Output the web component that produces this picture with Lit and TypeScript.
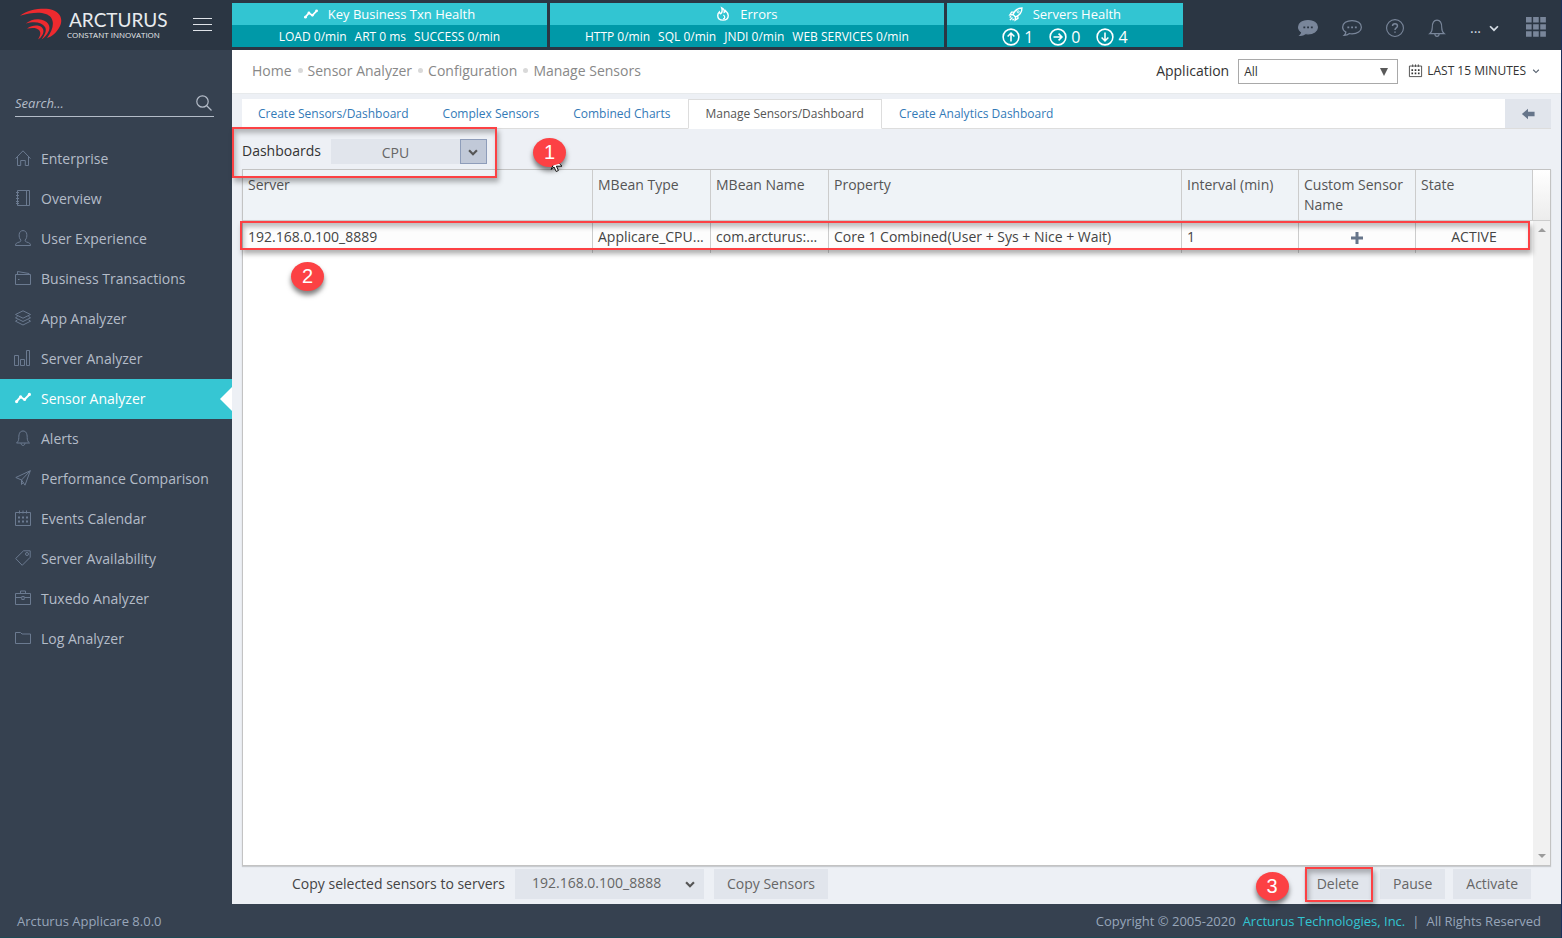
import { LitElement, html, css, svg, TemplateResult } from "lit";
import { customElement, state } from "lit/decorators.js";

type Shape = TemplateResult;

// Outline icons on a 16 x 16 grid; strokes take the current text colour.
const icons: Record<string, Shape> = {
  home: svg`<path d="M.5 8.6 8 .8l7.5 7.8M2.5 6.8v8.7h3.2v-5h4.6v5h3.2V6.8"/>`,
  book: svg`<path d="M2.5.5h12v15h-12zM11.5.5v15M1 2.5h3M1 5.5h3M1 8.500h3M1 11.500h3M1 13.500h3"/>`,
  user: svg`<path d="M5.800 10C4.400 8.600 4 6.600 4.200 4.300 4.400 2 6 .6 8 .6s3.600 1.400 3.800 3.700c.2 2.300-.2 4.300-1.600 5.700-.2 1.300.4 1.700 1.600 2.100 2.200.7 3.700 1 3.700 3.400H.5c0-2.400 1.500-2.700 3.700-3.400 1.200-.4 1.800-.8 1.600-2.100z"/>`,
  wallet: svg`<path d="M.5 4.500h15v10H.5zM2.500 4.300V1.500l11.500 2v1M3 9.500h1.500"/>`,
  layers: svg`<path d="m8 .8 7.500 3.700L8 8.200.5 4.500zM2.500 6.500l-2 1.300L8 11.500l7.500-3.700-2-1.300M2.500 9.800l-2 1.400L8 15l7.500-3.800-2-1.400"/>`,
  bars: svg`<path d="M-.5 5.500h4v10h-4zM5.500 9.500h4v6h-4zM11.500.5h3v15h-3z"/>`,
  trend: svg`<path stroke-width="2" d="m1.500 11.500 4-4.500 4 2.500 5-5"/><g fill="currentColor" stroke="none"><circle cx="1.600" cy="11.600" r="1.600"/><circle cx="5.600" cy="6.800" r="1.600"/><circle cx="9.600" cy="9.400" r="1.500"/><circle cx="14.400" cy="4.400" r="1.600"/></g>`,
  bell: svg`<path d="M1.500 13c1.800-1.400 2.300-3 2.300-5.500C3.800 3.500 5 1 8 1s4.200 2.500 4.200 6.500c0 2.500.5 4.100 2.300 5.500zM6 13.200c.2 1.500.8 2.200 2 2.200s1.800-.7 2-2.200"/>`,
  plane: svg`<path d="M.8 7.500 15.300.7 10 15.200 6.500 10zM15.300.7 6.500 10v4.500l1.800-2"/>`,
  calendar: svg`<path d="M.5 2.500h15v13H.5zM4.500.5v3M8 .5v3M11.500.5v3"/><path stroke-width="2" stroke-dasharray="2 2" d="M3 7.500h10M3 11.500h10"/>`,
  tag: svg`<path d="M8.500.8h6.700v6.500l-8 8L.7 8.500z"/><circle cx="12" cy="4" r="1.500"/>`,
  case: svg`<path d="M.5 3.500h15v11H.5zM5.500 3.300V1h5v2.300M.5 7.500h6M9.500 7.500h6M6.800 6.500h2.400v3H6.800z"/>`,
  folder: svg`<path d="M.5 2.500h5l1.500 1.500h8.500v9.500H.5z"/>`,
  search: svg`<circle cx="6.500" cy="6.500" r="5.700"/><path d="m10.500 10.500 5 5"/>`,
  flame: svg`<path stroke-width="1.600" d="M6.500 1c2.500 1.200 3.400 3 3 5 .9-.3 1.300-.9 1.400-1.800C12.800 5.800 14 7.600 14 9.700c0 3.300-2.600 5.300-6 5.300s-6-2-6-5.300C2 8 2.700 6.700 3.800 5.700 4 6.900 4.500 7.500 5.300 7.800 7.500 6 7.300 3.500 6.500 1z"/><path stroke-width="1.400" d="M8.500 9c1 1 1.500 1.700 1.500 2.700 0 1-.8 1.800-2 1.800"/>`,
  rocket: svg`<path stroke-width="1.600" d="M4.500 8.500C6.500 4 9.500 1.200 14.800 1.200c0 5.300-2.800 8.300-7.300 10.300zM6 5.800H3L1 9l3.500-.4M10.200 10v3L7 15l.4-3.500"/><circle cx="10.500" cy="5.500" r="1.200"/><path stroke-width="1.600" d="M1 15l3-3M.8 12l1.500-1.500M4 15.200l1.500-1.500"/>`,
  up: svg`<g stroke-width="1.400"><circle cx="8" cy="8" r="7"/><path d="M8 12V4.500M5 7.500l3-3 3 3"/></g>`,
  right: svg`<g stroke-width="1.400"><circle cx="8" cy="8" r="7"/><path d="M4 8h7.500M8.500 5l3 3-3 3"/></g>`,
  down: svg`<g stroke-width="1.400"><circle cx="8" cy="8" r="7"/><path d="M8 4v7.500M5 8.500l3 3 3-3"/></g>`,
  chat: svg`<path fill="currentColor" d="M8 2c4.200 0 7.500 2.200 7.500 5.300S12.200 12.600 8 12.600c-.8 0-1.400 0-2-.2-1.300 1-2.700 1.500-4.300 1.500.9-.8 1.300-1.600 1.400-2.600C1.500 10.300.5 8.900.5 7.300.5 4.200 3.800 2 8 2z"/><path stroke="#2b3643" stroke-width="1.500" stroke-dasharray="1.500 1.500" d="M4.300 7.500h8"/>`,
  chatLine: svg`<path d="M8 2c4.200 0 7.500 2.200 7.500 5.300S12.200 12.600 8 12.600c-.8 0-1.400 0-2-.2-1.300 1-2.700 1.500-4.300 1.500.9-.8 1.300-1.600 1.400-2.600C1.500 10.300.5 8.900.5 7.300.5 4.200 3.800 2 8 2z"/><path stroke-width="1.500" stroke-dasharray="1.500 1.500" d="M4.300 7.500h8"/>`,
  help: svg`<circle cx="8" cy="8" r="7.500"/><path stroke-width="1.300" d="M5.800 6.300C5.800 5 6.700 4.200 8 4.200s2.200.8 2.200 2C10.200 7.900 8 7.900 8 9.700M8 11v1.300"/>`,
  chevron: svg`<path d="m3.500 6 4.500 4.500L12.500 6"/>`,
  apps: svg`<path stroke="none" fill="currentColor" d="M0 0h4.500v4.300H0zM5.700 0h4.500v4.300H5.700zM11.400 0h4.500v4.300h-4.500zM0 5.700h4.500V10H0zM5.700 5.700h4.500V10H5.700zM11.400 5.700h4.500V10h-4.500zM0 11.400h4.500v4.300H0zM5.700 11.400h4.500v4.300H5.700zM11.400 11.400h4.500v4.300h-4.500z"/>`,
  back: svg`<path stroke="none" fill="currentColor" d="M1 8l7-6v3.500h7.500v5H8V14z"/>`,
  plus: svg`<path stroke-width="4" d="M8 0v16M0 8h16"/>`,
};

const icon = (name: string, cls = "", size = 16) => html`<svg
  class="icon ${cls}"
  width=${size}
  height=${size}
  viewBox="0 0 16 16"
  aria-hidden="true"
>
  ${icons[name]}
</svg>`;

const base = css`
  * {
    box-sizing: border-box;
  }
  a {
    text-decoration: none;
    color: inherit;
  }
  ul {
    list-style: none;
    margin: 0;
    padding: 0;
  }
  button,
  input,
  select {
    font: inherit;
    color: inherit;
    border: 0;
    border-radius: 0;
    padding: 0;
    margin: 0;
    background: none;
    outline: 0;
  }
  select {
    appearance: none;
  }
  .icon {
    display: block;
    flex: none;
    fill: none;
    stroke: currentColor;
    overflow: visible;
  }
  .thick {
    stroke-width: 2.5;
  }
`;

@customElement("app-header")
class AppHeader extends LitElement {
  static styles = [
    base,
    css`
      :host {
        display: flex;
        height: 50px;
        background: #2b3643;
        color: #fff;
        font-size: 13px;
      }
      .brand {
        flex: none;
        width: 232px;
        display: flex;
        align-items: flex-start;
        padding: 8px 20px 0 20px;
      }
      .swoosh {
        flex: none;
        width: 42px;
        height: 33px;
      }
      .words {
        display: flex;
        flex-direction: column;
        padding: 1px 0 0 5px;
        font-family: Lato, sans-serif;
        color: #e8ebee;
        white-space: nowrap;
      }
      .name {
        font-size: 19px;
        line-height: 21px;
        padding-left: 2px;
      }
      .motto {
        font-family: "Open Sans", sans-serif;
        font-size: 8px;
        line-height: 10px;
      }
      .menu {
        margin: 10px 0 0 auto;
        width: 19px;
        height: 13px;
        border-top: 1px solid #dfe3e8;
        border-bottom: 1px solid #dfe3e8;
        display: flex;
        align-items: center;
      }
      .menu i {
        flex: 1;
        height: 1px;
        background: #dfe3e8;
      }
      .health {
        flex: none;
        width: 951px;
        display: grid;
        grid-template-columns: 4fr 5fr 3fr;
        gap: 3px;
        padding: 3px 0;
      }
      .tile {
        display: grid;
        grid-template-rows: 22px 22px;
      }
      .title,
      .stats {
        display: flex;
        align-items: center;
        justify-content: center;
        white-space: nowrap;
      }
      .title {
        background: #32c5d2;
        gap: 10px;
      }
      .stats {
        background: #0099a8;
        gap: 8px;
        padding-top: 2px;
        font-size: 12px;
      }
      .stats.counts {
        gap: 16px;
        font-size: 16px;
      }
      .count {
        display: flex;
        align-items: center;
        gap: 4px;
      }
      .tools {
        flex: 1;
        display: flex;
        align-items: center;
        justify-content: flex-end;
        padding: 6px 15px 0 0;
        color: #79869a;
      }
      .tools button {
        display: block;
        margin-right: 24px;
      }
      .tools .account {
        display: flex;
        align-items: center;
        gap: 6px;
        color: #d5dce4;
        margin-right: 25px;
        font-size: 14px;
      }
      .account .icon {
        stroke-width: 2;
      }
      .tools .apps {
        margin: 0;
        padding-bottom: 2px;
      }
    `,
  ];

  render() {
    return html`
      <div class="brand">
        <svg class="swoosh" viewBox="0 0 42 33" fill="#ed2a2f" aria-hidden="true">
          <path d="M0 7.700C8 1 22 0 29 1c12 2 14.500 11 10.500 18-3 5.500-7 9.500-12.500 11 6-8 7.500-15.500 4-20.500C26.500 3.500 14 3.500 0 7.700z" />
          <path d="M5.700 15.500C10 12.500 14 11 18.500 11.300c9 .6 13.500 7.200 9.500 13.200-1.500 2.600-3.500 5-6.500 7 3.500-5 5.500-9 3.500-12.500-3-4.500-10-6-19.300-3.500z" />
          <path d="M7 20.500c4-2.500 7-3.200 10.500-2.900 6 .7 7.500 6 4.500 10-1 1.500-2 2.900-4 3.900 2-3.500 3.500-6.500 1-9.500-2.500-2.300-6-2.500-12-1.500z" />
        </svg>
        <div class="words">
          <span class="name">ARCTURUS</span>
          <span class="motto">CONSTANT INNOVATION</span>
        </div>
        <button class="menu" aria-label="Toggle menu"><i></i></button>
      </div>
      <div class="health">
        <div class="tile">
          <div class="title">${icon("trend", "", 14)}<span>Key Business Txn Health</span></div>
          <div class="stats"><span>LOAD 0/min</span><span>ART 0 ms</span><span>SUCCESS 0/min</span></div>
        </div>
        <div class="tile">
          <div class="title">${icon("flame", "", 14)}<span>Errors</span></div>
          <div class="stats">
            <span>HTTP 0/min</span><span>SQL 0/min</span><span>JNDI 0/min</span><span>WEB SERVICES 0/min</span>
          </div>
        </div>
        <div class="tile">
          <div class="title">${icon("rocket", "", 14)}<span>Servers Health</span></div>
          <div class="stats counts">
            ${[["up", 1], ["right", 0], ["down", 4]].map(
              ([name, n]) => html`<span class="count">${icon(name as string, "", 18)}${n}</span>`
            )}
          </div>
        </div>
      </div>
      <div class="tools">
        <button aria-label="Messages">${icon("chat", "", 20)}</button>
        <button aria-label="Chat">${icon("chatLine", "", 20)}</button>
        <button aria-label="Help">${icon("help", "", 18)}</button>
        <button aria-label="Notifications">${icon("bell", "", 18)}</button>
        <button class="account" aria-label="Account"><span>...</span>${icon("chevron", "", 14)}</button>
        <button class="apps" aria-label="Applications">${icon("apps", "", 20)}</button>
      </div>
    `;
  }
}

@customElement("app-sidebar")
class AppSidebar extends LitElement {
  static styles = [
    base,
    css`
      :host {
        display: block;
        background: #364150;
        color: #b4bcc8;
      }
      .search {
        display: flex;
        align-items: center;
        margin: 39px 18px 22px 15px;
        padding-right: 2px;
        height: 28px;
        border-bottom: 1px solid #b4bcc8;
      }
      .search input {
        flex: 1;
        min-width: 0;
        font-size: 13px;
        font-style: italic;
      }
      .search input::placeholder {
        color: #b4bcc8;
        opacity: 1;
      }
      .search .icon {
        stroke-width: 1.2;
      }
      .link {
        display: flex;
        align-items: center;
        gap: 10px;
        height: 40px;
        padding-left: 15px;
        position: relative;
        white-space: nowrap;
      }
      .link .icon {
        color: #6b7a90;
        margin-bottom: 2px;
      }
      .link.on {
        background: #36c6d3;
        color: #fff;
      }
      .link.on .icon {
        color: #fff;
      }
      .link.on::after {
        content: "";
        position: absolute;
        right: 0;
        top: 8px;
        border: 12px solid transparent;
        border-left-width: 0;
        border-right-color: #fff;
      }
    `,
  ];

  private items = [
    ["home", "Enterprise"],
    ["book", "Overview"],
    ["user", "User Experience"],
    ["wallet", "Business Transactions"],
    ["layers", "App Analyzer"],
    ["bars", "Server Analyzer"],
    ["trend", "Sensor Analyzer"],
    ["bell", "Alerts"],
    ["plane", "Performance Comparison"],
    ["calendar", "Events Calendar"],
    ["tag", "Server Availability"],
    ["case", "Tuxedo Analyzer"],
    ["folder", "Log Analyzer"],
  ];

  render() {
    return html`
      <form class="search">
        <input type="text" placeholder="Search..." aria-label="Search" />
        <button type="button" aria-label="Search">${icon("search", "", 16)}</button>
      </form>
      <nav>
        <ul>
          ${this.items.map(
            ([name, label]) => html`<li>
              <a class="link ${label === "Sensor Analyzer" ? "on" : ""}" href="#">${icon(name)}<span>${label}</span></a>
            </li>`
          )}
        </ul>
      </nav>
    `;
  }
}

@customElement("sensor-page")
class SensorPage extends LitElement {
  @state() private tab = "Manage Sensors/Dashboard";

  static styles = [
    base,
    css`
      :host {
        display: flex;
        flex-direction: column;
        min-width: 0;
        background: #edf0f5;
        color: #333;
      }
      .bar {
        display: flex;
        align-items: center;
        height: 44px;
        padding: 0 20px;
        background: #fff;
        border-bottom: 1px solid #e7eaec;
      }
      .crumbs,
      .bar label,
      .bar .range {
        padding-bottom: 2px;
      }
      .crumbs {
        display: flex;
        align-items: center;
        flex: 1;
        color: #888;
      }
      .crumbs li {
        display: flex;
        align-items: center;
      }
      .crumbs li + li::before {
        content: "";
        width: 5px;
        height: 5px;
        border-radius: 50%;
        background: #d9d9d9;
        margin: 0 5px 0 6px;
      }
      .pick {
        position: relative;
        display: flex;
        align-items: center;
      }
      .pick .icon {
        position: absolute;
        right: 7px;
        pointer-events: none;
      }
      .app {
        margin: 0 11px 0 9px;
      }
      .app select {
        width: 160px;
        height: 25px;
        padding: 0 5px;
        border: 1px solid #a9a9a9;
        background: #fff;
        font-size: 12px;
      }
      .app::after {
        content: "";
        position: absolute;
        right: 10px;
        border: 4px solid transparent;
        border-top: 8px solid #5a5a5a;
        border-bottom: 0;
        pointer-events: none;
      }
      .range {
        display: flex;
        align-items: center;
        gap: 5px;
        font-size: 12px;
      }
      .range .small {
        color: #55606e;
        stroke-width: 1.8;
      }
      .content {
        flex: 1;
        display: flex;
        flex-direction: column;
        padding: 5px 10px;
      }
      .tabs {
        display: flex;
        height: 30px;
      }
      .tabs ul {
        flex: 1;
        display: flex;
        background: #fff;
        border-bottom: 1px solid #ddd;
      }
      .tab {
        height: 30px;
        padding: 0 16px;
        border: 1px solid transparent;
        font-size: 12px;
        color: #337ab7;
        white-space: nowrap;
        display: block;
      }
      li:first-child .tab {
        border-left: 0;
      }
      .tab.on {
        padding: 0 17px;
        background: #fff;
        color: #555;
        border-color: #ddd #ddd #fff;
      }
      .back {
        width: 46px;
        background: #e1e5ec;
        color: #66758a;
        border-bottom: 1px solid #ddd;
        display: grid;
        place-items: center;
      }
      .filter {
        position: relative;
        align-self: flex-start;
        display: flex;
        align-items: center;
        gap: 10px;
        height: 40px;
        padding-top: 5px;
      }
      .filter label {
        padding-bottom: 2px;
      }
      .mark {
        position: absolute;
        z-index: 2;
        border: 2px solid #fc4144;
        pointer-events: none;
        box-shadow: 2px 4px 5px rgba(0, 0, 0, 0.3), inset 2px 4px 5px rgba(0, 0, 0, 0.25);
      }
      .filter .mark {
        inset: -2px -10px -9px;
      }
      .badge {
        position: absolute;
        z-index: 3;
        width: 33px;
        height: 29px;
        border-radius: 50%;
        background: #fc4144;
        color: #fff;
        font: 20px/29px "Liberation Sans", sans-serif;
        text-align: center;
        box-shadow: 0 4px 5px rgba(0, 0, 0, 0.5);
      }
      .badge.one {
        left: 291px;
        top: 9px;
      }
      .badge.two {
        left: 51px;
        top: 41px;
      }
      .badge.three {
        left: -48px;
        top: 3px;
      }
      .cursor {
        position: absolute;
        z-index: 4;
        left: 308px;
        top: 27px;
      }
      .boards select {
        width: 156px;
        height: 25px;
        padding: 2px 27px 0 0;
        background: #e1e5ec;
        color: #666;
        text-align: center;
        text-align-last: center;
      }
      .boards .arrow {
        position: absolute;
        right: 0;
        width: 27px;
        height: 25px;
        border: 1px solid #8e9dba;
        background: #c1c9d8;
        color: #555;
        display: grid;
        place-items: center;
        pointer-events: none;
      }
      .arrow .icon {
        position: static;
      }
      .grid {
        flex: 1;
        display: flex;
        align-items: stretch;
        background: #fff;
        border: 1px solid #c3c3c3;
        box-shadow: 0 1px 1px rgba(0, 0, 0, 0.15);
      }
      .sheet {
        position: relative;
        flex: 1;
        min-width: 0;
      }
      table {
        width: 100%;
        table-layout: fixed;
        border-collapse: separate;
        border-spacing: 0;
        color: #555;
      }
      th,
      td {
        border-right: 1px solid #ccc;
        padding: 5px;
        line-height: 20px;
        font-weight: 400;
        text-align: left;
        vertical-align: top;
        overflow: hidden;
        text-overflow: ellipsis;
      }
      th {
        height: 51px;
        background: #eff3f7;
        border-bottom: 1px solid #ccc;
      }
      td {
        height: 32px;
        padding: 6px 5px;
        white-space: nowrap;
        color: #444;
        background: #fdfdfd;
      }
      td:last-child {
        border-right-color: transparent;
      }
      td.mid {
        text-align: center;
      }
      td .icon {
        display: inline-block;
        vertical-align: -2px;
        color: #66758a;
      }
      .row-mark {
        position: absolute;
        inset: 51px 3px auto -3px;
        height: 29px;
      }
      .row-mark .mark {
        inset: 0;
      }
      .scroll {
        flex: none;
        width: 17px;
        display: flex;
        flex-direction: column;
        align-items: center;
        justify-content: space-between;
        background: #f1f1f1;
      }
      .corner {
        align-self: stretch;
        height: 51px;
        background: linear-gradient(#fff, #ececec);
        border-bottom: 1px solid #ccc;
      }
      .tri {
        border: 4px solid transparent;
      }
      .tri.up {
        border-bottom-color: #9b9b9b;
        border-top: 0;
        margin-top: 7px;
      }
      .tri.down {
        border-top-color: #9b9b9b;
        border-bottom: 0;
        margin: auto 0 7px;
      }
      .actions {
        position: relative;
        display: flex;
        align-items: center;
        padding: 3px 20px 0 50px;
        color: #444;
      }
      .btn,
      .target select {
        height: 30px;
        background: #e1e5ec;
        color: #666;
      }
      .btn {
        padding: 0 13px;
        white-space: nowrap;
      }
      .target {
        margin: 0 10px;
        color: #555;
      }
      .target select {
        width: 189px;
        padding: 0 17px 2px;
      }
      .group {
        position: relative;
        display: flex;
        gap: 8px;
        margin-left: auto;
      }
      .hot {
        position: relative;
      }
      .hot .mark {
        inset: -2px -1px -3px 1px;
      }
    `,
  ];

  render() {
    const tabs = [
      "Create Sensors/Dashboard",
      "Complex Sensors",
      "Combined Charts",
      "Manage Sensors/Dashboard",
      "Create Analytics Dashboard",
    ];
    return html`
      <div class="bar">
        <ul class="crumbs">
          ${["Home", "Sensor Analyzer", "Configuration", "Manage Sensors"].map(
            (c) => html`<li><a href="#">${c}</a></li>`
          )}
        </ul>
        <label for="app">Application</label>
        <div class="pick app">
          <select id="app"><option>All</option></select>
        </div>
        <button class="range">
          ${icon("calendar", "", 13)}<span>LAST 15 MINUTES</span>${icon("chevron", "small", 10)}
        </button>
      </div>
      <div class="content">
        <div class="tabs">
          <ul>
            ${tabs.map(
              (t) => html`<li>
                <button class="tab ${t === this.tab ? "on" : ""}" @click=${() => (this.tab = t)}>${t}</button>
              </li>`
            )}
          </ul>
          <button class="back" aria-label="Back">${icon("back", "", 14)}</button>
        </div>
        <div class="filter">
          <label for="board">Dashboards</label>
          <div class="pick boards">
            <select id="board"><option>CPU</option></select>
            <span class="arrow">${icon("chevron", "thick", 14)}</span>
          </div>
          <span class="mark"></span>
          <span class="badge one">1</span>
          <svg class="cursor" width="14" height="16" viewBox="0 0 14 16" aria-hidden="true">
            <path
              fill="#fff"
              stroke="#111"
              d="M3 9.500 1 13.500l3-2.500 2.200 4.500 2.200-1-2-4.300H12L9.500 7.800"
            />
          </svg>
        </div>
        <div class="grid">
          <div class="sheet">
            <table>
              <colgroup>
                ${[350, 118, 118, 353, 117, 117, 117].map((w) => html`<col style="width:${(w / 1290) * 100}%" />`)}
              </colgroup>
              <thead>
                <tr>
                  ${["Server", "MBean Type", "MBean Name", "Property", "Interval (min)", "Custom Sensor Name", "State"].map(
                    (h) => html`<th scope="col">${h}</th>`
                  )}
                </tr>
              </thead>
              <tbody>
                <tr>
                  <td>192.168.0.100_8889</td>
                  <td>Applicare_CPU...</td>
                  <td>com.arcturus:...</td>
                  <td>Core 1 Combined(User + Sys + Nice + Wait)</td>
                  <td>1</td>
                  <td class="mid"><button aria-label="Add custom name">${icon("plus", "", 12)}</button></td>
                  <td class="mid">ACTIVE</td>
                </tr>
              </tbody>
            </table>
            <div class="row-mark">
              <span class="mark"></span>
              <span class="badge two">2</span>
            </div>
          </div>
          <div class="scroll">
            <span class="corner"></span>
            <i class="tri up"></i>
            <i class="tri down"></i>
          </div>
        </div>
        <div class="actions">
          <label for="target">Copy selected sensors to servers</label>
          <div class="pick target">
            <select id="target"><option>192.168.0.100_8888</option></select>
            ${icon("chevron", "thick", 14)}
          </div>
          <button class="btn">Copy Sensors</button>
          <div class="group">
            <span class="badge three">3</span>
            <div class="hot"><button class="btn">Delete</button><span class="mark"></span></div>
            <button class="btn">Pause</button>
            <button class="btn">Activate</button>
          </div>
        </div>
      </div>
    `;
  }
}

@customElement("app-root")
class AppRoot extends LitElement {
  static styles = [
    base,
    css`
      :host {
        display: flex;
        flex-direction: column;
        box-sizing: border-box;
        min-height: 100vh;
        border-right: 1px solid #1b2f5b;
        background: #364150;
        font: 14px/20px "Open Sans", "Noto Sans", sans-serif;
      }
      .body {
        flex: 1;
        display: grid;
        grid-template-columns: 232px minmax(0, 1fr);
      }
      .footer {
        display: flex;
        justify-content: space-between;
        align-items: center;
        height: 34px;
        padding: 0 20px 0 17px;
        font-size: 13px;
        color: #98a6ba;
        border-bottom: 1px solid #1d4a55;
      }
      .legal {
        display: flex;
        gap: 7px;
      }
      .legal a {
        color: #32c5d2;
      }
    `,
  ];

  render() {
    return html`
      <app-header></app-header>
      <div class="body">
        <app-sidebar></app-sidebar>
        <sensor-page></sensor-page>
      </div>
      <footer class="footer">
        <span>Arcturus Applicare 8.0.0</span>
        <span class="legal">
          <span>Copyright © 2005-2020</span>
          <a href="#">Arcturus Technologies, Inc.</a>
          <span>|</span>
          <span>All Rights Reserved</span>
        </span>
      </footer>
    `;
  }
}
